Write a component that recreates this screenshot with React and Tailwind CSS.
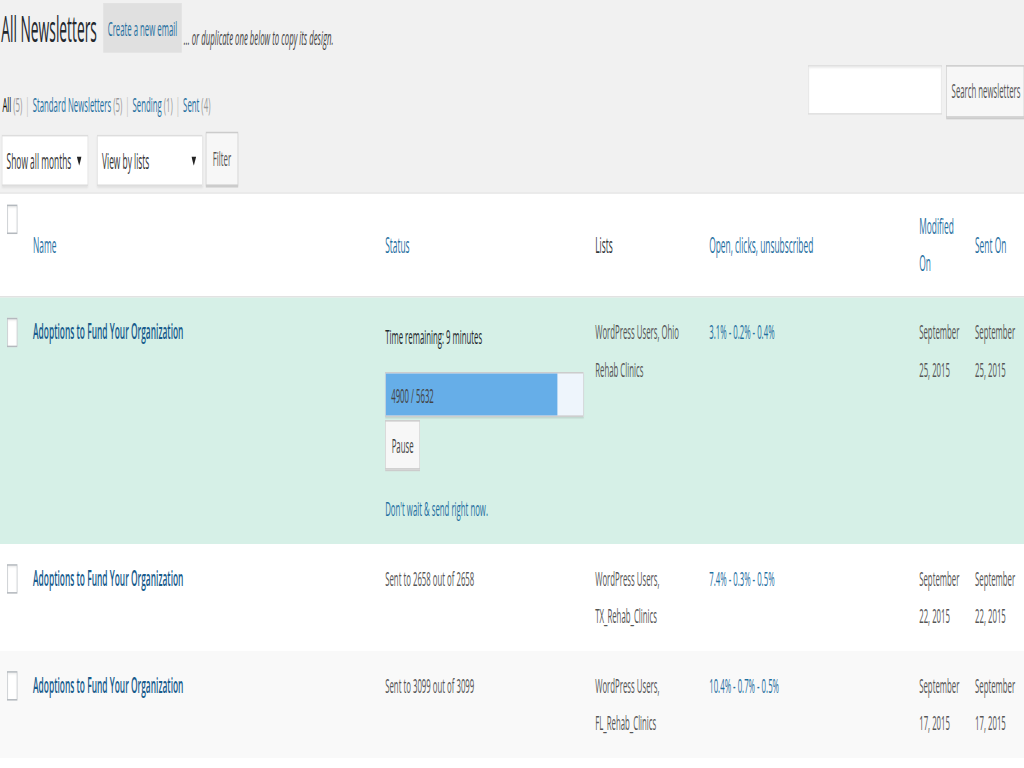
import clsx from 'clsx';

const COLS = 'grid grid-cols-[45px_587px_350px_190px_350px_93px_92px]';
const LINK = 'text-[#1f6f9f]';

const rows = [
  {
    id: 1,
    title: 'Adoptions to Fund Your Organization',
    sending: { done: 4900, total: 5632, remaining: '9 minutes' },
    lists: 'WordPress Users, Ohio Rehab Clinics',
    stats: '3.1% - 0.2% - 0.4%',
    modified: 'September 25, 2015',
    sent: 'September 25, 2015',
    bg: 'bg-[#d6f0e7]',
  },
  {
    id: 2,
    title: 'Adoptions to Fund Your Organization',
    status: 'Sent to 2658 out of 2658',
    lists: 'WordPress Users, TX_Rehab_Clinics',
    stats: '7.4% - 0.3% - 0.5%',
    modified: 'September 22, 2015',
    sent: 'September 22, 2015',
    bg: 'bg-white',
  },
  {
    id: 3,
    title: 'Adoptions to Fund Your Organization',
    status: 'Sent to 3099 out of 3099',
    lists: 'WordPress Users, FL_Rehab_Clinics',
    stats: '10.4% - 0.7% - 0.5%',
    modified: 'September 17, 2015',
    sent: 'September 17, 2015',
    bg: 'bg-[#f9f9f9]',
  },
];

const Checkbox = ({ className }) => (
  <div className={clsx('w-[17px] h-[19px] border border-[#b4b9be] bg-white shadow-[inset_0_1px_2px_rgba(0,0,0,0.07)]', className)} />
);

const Caret = () => (
  <svg width="8" height="6" viewBox="0 0 8 6" className="shrink-0">
    <path d="M0 0h8L4 6z" fill="#222" />
  </svg>
);

const FakeSelect = ({ label, className }) => (
  <div
    className={clsx(
      'h-[33px] bg-white border border-[#ddd] shadow-[0_1px_2px_rgba(0,0,0,0.07)] flex items-center justify-between pl-[7px] pr-[10px] text-[14px] text-[#333]',
      className
    )}
  >
    <span>{label}</span>
    <Caret />
  </div>
);

const cell = 'px-[10px] pt-[10px] pb-[11px] leading-[24px]';

export default function App() {
  return (
    <div className="w-[1024px] h-[768px] overflow-hidden bg-[#f1f1f1]">
      <div className="w-[1707px] h-[496px] origin-top-left scale-x-[0.6] scale-y-[1.55] font-['Open_Sans',sans-serif] text-[13px] text-[#555]">
        {/* Title */}
        <div className="flex items-start h-[34px] pl-[2px] pt-[2px]">
          <h1 className="text-[23px] leading-[27px] mt-[3px] text-[#23282d] font-normal">All Newsletters</h1>
          <a className={clsx('ml-[10px] h-[32px] px-[8px] pt-[2px] flex items-center bg-[#e0e0e0] text-[13px]', LINK)}>
            Create a new email
          </a>
          <span className="ml-[3px] mt-[12px] leading-[20px] italic text-[#444]">
            ... or duplicate one below to copy its design.
          </span>
        </div>

        {/* Views + search */}
        <div className="mt-[9px] flex justify-between items-start">
          <div className="pt-[14px] pl-[4px] leading-[20px] flex items-center gap-[5px]">
            <span className="text-black">
              All <span className="text-[#999]">(5)</span>
            </span>
            <span className="text-[#bbb]">|</span>
            <a className={LINK}>
              Standard Newsletters <span className="text-[#999]">(5)</span>
            </a>
            <span className="text-[#bbb]">|</span>
            <a className={LINK}>
              Sending <span className="text-[#999]">(1)</span>
            </a>
            <span className="text-[#bbb]">|</span>
            <a className={LINK}>
              Sent <span className="text-[#999]">(4)</span>
            </a>
          </div>
          <div className="flex items-start gap-[7px] -mt-[1px]">
            <div className="w-[223px] h-[32px] bg-white border border-[#ddd] shadow-[inset_0_1px_2px_rgba(0,0,0,0.07)]" />
            <button className="w-[130px] h-[34px] border border-[#ccc] bg-[#f7f7f7] shadow-[0_1px_0_#ccc] text-[13px] text-[#555] whitespace-nowrap text-left pl-[8px]">
              Search newsletters
            </button>
          </div>
        </div>

        {/* Filters */}
        <div className="mt-[10px] flex items-start pl-[3px]">
          <FakeSelect label="Show all months" className="w-[144px]" />
          <FakeSelect label="View by lists" className="w-[176px] ml-[15px]" />
          <button className="ml-[5px] -mt-[2px] w-[54px] h-[35px] border border-[#ccc] bg-[#f7f7f7] shadow-[0_1px_0_#ccc] text-[13px] text-[#555]">
            Filter
          </button>
        </div>

        {/* Table */}
        <div className="mt-[4px] bg-white border-t border-[#e5e5e5] shadow-[0_1px_1px_rgba(0,0,0,0.04)]">
          <div className={clsx(COLS, 'h-[67px] border-b border-[#e1e1e1] text-[14px] leading-[24px]')}>
            <div className="pl-[12px] pt-[7px]">
              <Checkbox />
            </div>
            <div className={clsx('px-[10px] flex items-center', LINK)}>Name</div>
            <div className={clsx('px-[10px] flex items-center', LINK)}>Status</div>
            <div className="px-[10px] flex items-center text-[#32373c]">Lists</div>
            <div className={clsx('px-[10px] flex items-center', LINK)}>Open, clicks, unsubscribed</div>
            <div className={clsx('px-[10px] flex items-center', LINK)}>Modified On</div>
            <div className={clsx('px-[10px] flex items-center', LINK)}>Sent On</div>
          </div>

          {rows.map((row) => (
            <div key={row.id} className={clsx(COLS, row.bg)}>
              <div className="pl-[12px] pt-[13px]">
                <Checkbox />
              </div>
              <div className={clsx(cell, 'text-[14px] font-semibold text-[#175b8c]')}>{row.title}</div>
              <div className={cell}>
                {row.sending ? (
                  <div>
                    <div className="mt-[3px] text-[#23282d]">Time remaining: {row.sending.remaining}</div>
                    <div className="mt-[11px] w-[331px] h-[29px] border border-[#ccc] bg-[#eef5fc] shadow-[0_1px_1px_rgba(0,0,0,0.1)]">
                      <div
                        className="h-full bg-[#66aee8] flex items-center pl-[9px] text-[#444] whitespace-nowrap"
                        style={{ width: `${(row.sending.done / row.sending.total) * 100}%` }}
                      >
                        {row.sending.done} / {row.sending.total}
                      </div>
                    </div>
                    <button className="mt-[2px] w-[58px] h-[32px] border border-[#ccc] bg-[#f7f7f7] shadow-[0_1px_0_#ccc] text-[13px] text-[#444]">
                      Pause
                    </button>
                    <div className="mt-[13px]">
                      <a className={LINK}>Don't wait &amp; send right now.</a>
                    </div>
                  </div>
                ) : (
                  row.status
                )}
              </div>
              <div className={cell}>{row.lists}</div>
              <div className={clsx(cell, LINK)}>{row.stats}</div>
              <div className={cell}>{row.modified}</div>
              <div className={cell}>{row.sent}</div>
            </div>
          ))}
          <div className="h-[40px] bg-white" />
        </div>
      </div>
    </div>
  );
}
